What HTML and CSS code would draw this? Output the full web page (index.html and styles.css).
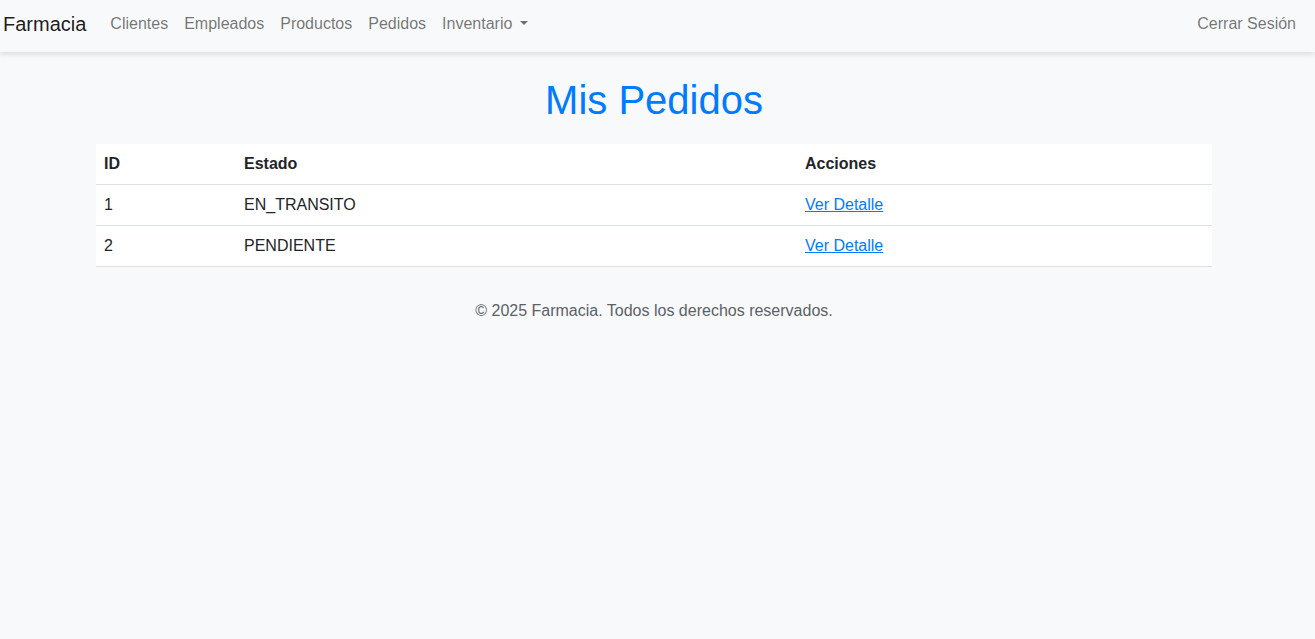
FILE: index.html
```html
<!DOCTYPE html>
<html lang="es">
<head>
<meta charset="utf-8">
<title>Mis Pedidos</title>
<link rel="stylesheet" href="styles.css">
</head>
<body>
<nav class="navbar">
  <a class="brand" href="#">Farmacia</a>
  <ul class="nav">
    <li><a class="nav-link" href="#">Clientes</a></li>
    <li><a class="nav-link" href="#">Empleados</a></li>
    <li><a class="nav-link" href="#">Productos</a></li>
    <li><a class="nav-link" href="#">Pedidos</a></li>
    <li><a class="nav-link dropdown" href="#">Inventario<span class="caret"></span></a></li>
  </ul>
  <ul class="nav nav-right">
    <li><a class="nav-link" href="#">Cerrar Sesión</a></li>
  </ul>
</nav>
<main class="container">
  <h1 class="title">Mis Pedidos</h1>
  <table class="table">
    <thead>
      <tr><th class="c-id">ID</th><th class="c-estado">Estado</th><th>Acciones</th></tr>
    </thead>
    <tbody>
      <tr><td>1</td><td>EN_TRANSITO</td><td><a href="#">Ver Detalle</a></td></tr>
      <tr><td>2</td><td>PENDIENTE</td><td><a href="#">Ver Detalle</a></td></tr>
    </tbody>
  </table>
  <footer class="footer">© 2025 Farmacia. Todos los derechos reservados.</footer>
</main>
</body>
</html>
```
FILE: styles.css
```css
html, body {
  margin: 0;
  padding: 0;
}
body {
  background: #f8f9fa;
  color: #212529;
  font-family: "Liberation Sans", Arial, sans-serif;
  font-size: 16px;
  line-height: 1.5;
}
a {
  color: #007bff;
}
.navbar {
  display: flex;
  align-items: center;
  height: 52px;
  padding: 0 11px 0 3px;
  background: #f8f9fa;
  box-shadow: 0 2px 6px rgba(0, 0, 0, 0.13);
  position: relative;
}
.brand {
  font-size: 20px;
  line-height: 30px;
  color: rgba(0, 0, 0, 0.9);
  text-decoration: none;
  margin-right: 16px;
  margin-top: -5px;
}
.nav {
  display: flex;
  list-style: none;
  margin: 0;
  padding: 0;
  margin-top: -4px;
}
.nav-right {
  margin-left: auto;
}
.nav-link {
  display: block;
  padding: 8px;
  color: rgba(0, 0, 0, 0.55);
  text-decoration: none;
}
.caret {
  display: inline-block;
  margin-left: 0.45em;
  vertical-align: 0.255em;
  border-top: 0.3em solid;
  border-left: 0.3em solid transparent;
  border-right: 0.3em solid transparent;
}
.container {
  width: 1116px;
  margin: 0 0 0 96px;
}
.title {
  margin: 24px 0 20px;
  text-align: center;
  font-size: 40px;
  font-weight: 400;
  line-height: 1.2;
  color: #007bff;
}
.table {
  width: 100%;
  border-collapse: collapse;
  background: #fff;
}
.table th,
.table td {
  text-align: left;
  padding: 8px;
  line-height: 24px;
  border-bottom: 1px solid #dee2e6;
}
.table th {
  font-weight: 700;
}
.c-id {
  width: 124px;
}
.c-estado {
  width: 545px;
}
.footer {
  text-align: center;
  color: #5c6166;
  margin-top: 32px;
}
```
